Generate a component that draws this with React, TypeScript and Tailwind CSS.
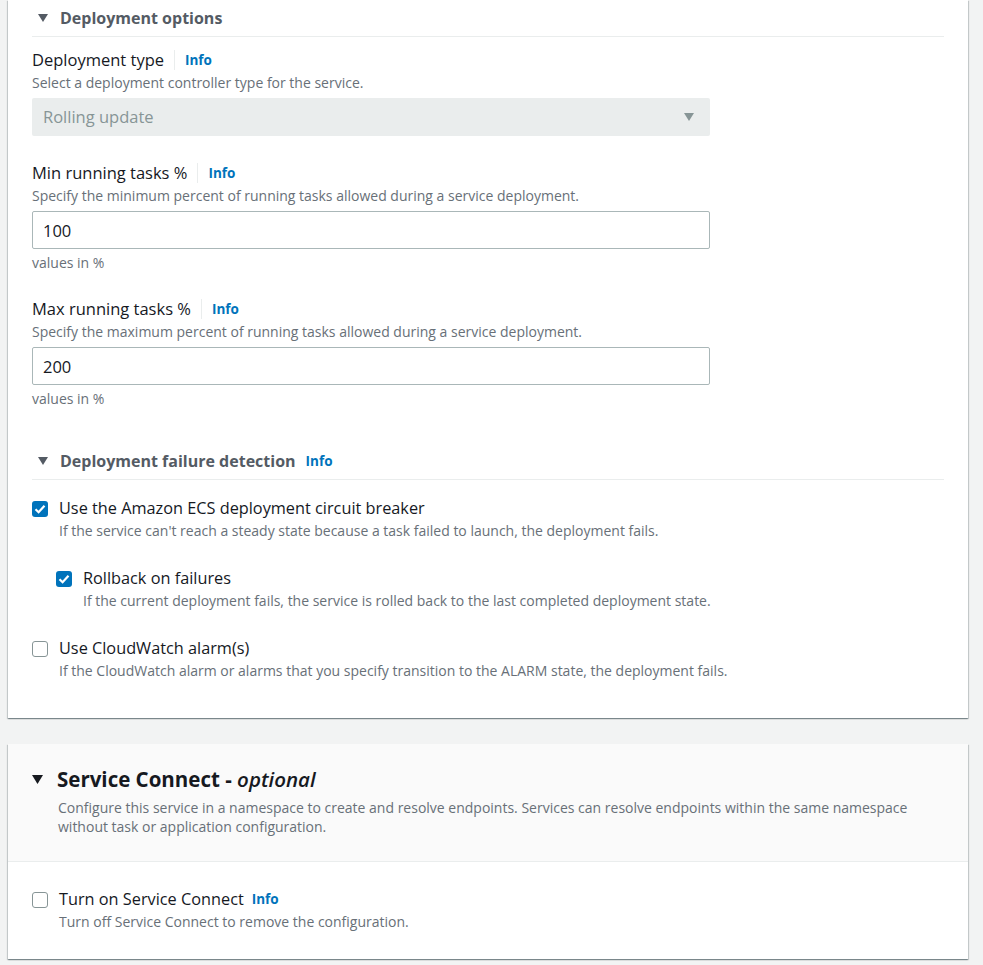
import React from 'react';

const font = { fontFamily: '"Open Sans", "Noto Sans", Arial, sans-serif' };

const Caret = ({ className = '' }: { className?: string }) => (
  <svg viewBox="0 0 10 8" className={className} fill="currentColor">
    <polygon points="0,0 10,0 5,8" />
  </svg>
);

const Info = () => (
  <a className="mt-[2px] text-[13.5px] font-bold text-[#0073bb] leading-none cursor-pointer">Info</a>
);

const Checkbox = ({ checked }: { checked?: boolean }) =>
  checked ? (
    <span className="mt-[4px] flex h-4 w-4 shrink-0 items-center justify-center rounded-[3px] bg-[#0073bb]">
      <svg viewBox="0 0 16 16" className="h-4 w-4" fill="none" stroke="white" strokeWidth="2.2">
        <polyline points="3.5,8.2 6.6,11.2 12.5,4.8" />
      </svg>
    </span>
  ) : (
    <span className="mt-[4px] block h-4 w-4 shrink-0 rounded-[3px] border border-[#879596] bg-white" />
  );

const Field = ({ label, hint, children }: { label: string; hint: string; children: React.ReactNode }) => (
  <div>
    <div className="flex items-center h-[22px]">
      <span className="text-[16.5px] text-[#16191f]">{label}</span>
      <span className="mx-[10px] h-[20px] w-px bg-[#eaeded]" />
      <Info />
    </div>
    <p className="mt-[3px] text-[14px] leading-[18px] text-[#687078]">{hint}</p>
    <div className="mt-[6px]">{children}</div>
  </div>
);

const Option = ({ checked, label, hint, info }: { checked?: boolean; label: string; hint: string; info?: boolean }) => (
  <label className="flex gap-[11px]">
    <Checkbox checked={checked} />
    <div>
      <div className="flex items-center gap-[8px] h-[22px]">
        <span className="text-[16.3px] text-[#16191f]">{label}</span>
        {info && <Info />}
      </div>
      <p className="mt-[3px] text-[14px] leading-[18px] text-[#687078]">{hint}</p>
    </div>
  </label>
);

const SubHeader = ({ title, info }: { title: string; info?: boolean }) => (
  <div className="flex h-[37px] items-center gap-[10px] border-b border-[#eaeded] pl-[6px]">
    <Caret className="h-[8px] w-[10px] text-[#545b64]" />
    <span className="ml-[2px] text-[16px] font-bold text-[#545b64]">{title}</span>
    {info && <Info />}
  </div>
);

const cardShadow =
  'shadow-[0_1px_1px_0_rgba(0,28,36,0.3),1px_1px_1px_0_rgba(0,28,36,0.15),-1px_1px_1px_0_rgba(0,28,36,0.15)]';

export default function App() {
  return (
    <div style={font} className="min-h-screen bg-[#f2f3f3] pl-[8px] pr-[15px] pb-[5px]">
      {/* Deployment options */}
      <section className={`bg-white px-[24px] pb-[38px] ${cardShadow}`}>
        <SubHeader title="Deployment options" />

        <div className="mt-[12px] flex flex-col gap-[26px]">
          <Field label="Deployment type" hint="Select a deployment controller type for the service.">
            <div className="flex h-[38px] w-[678px] items-center justify-between rounded-[2px] bg-[#eaeded] px-[11px]">
              <span className="text-[16.5px] text-[#879596]">Rolling update</span>
              <Caret className="mr-[5px] h-[8px] w-[10px] text-[#879596]" />
            </div>
          </Field>

          <Field label="Min running tasks %" hint="Specify the minimum percent of running tasks allowed during a service deployment.">
            <input
              defaultValue="100"
              className="h-[38px] w-[678px] rounded-[2px] border border-[#aab7b8] px-[10px] text-[16.5px] text-[#16191f] outline-none"
            />
            <p className="mt-[5px] text-[14px] leading-[18px] text-[#687078]">values in %</p>
          </Field>

          <Field label="Max running tasks %" hint="Specify the maximum percent of running tasks allowed during a service deployment.">
            <input
              defaultValue="200"
              className="h-[38px] w-[678px] rounded-[2px] border border-[#aab7b8] px-[10px] text-[16.5px] text-[#16191f] outline-none"
            />
            <p className="mt-[5px] text-[14px] leading-[18px] text-[#687078]">values in %</p>
          </Field>
        </div>

        <div className="mt-[35px]">
          <SubHeader title="Deployment failure detection" info />
        </div>

        <div className="mt-[17px] flex flex-col gap-[27px]">
          <div className="flex flex-col gap-[27px]">
            <Option
              checked
              label="Use the Amazon ECS deployment circuit breaker"
              hint="If the service can't reach a steady state because a task failed to launch, the deployment fails."
            />
            <div className="pl-[24px]">
              <Option
                checked
                label="Rollback on failures"
                hint="If the current deployment fails, the service is rolled back to the last completed deployment state."
              />
            </div>
          </div>
          <Option
            label="Use CloudWatch alarm(s)"
            hint="If the CloudWatch alarm or alarms that you specify transition to the ALARM state, the deployment fails."
          />
        </div>
      </section>

      {/* Service Connect */}
      <section className={`mt-[26px] bg-white ${cardShadow}`}>
        <div className="border-b border-[#eaeded] bg-[#fafafa] px-[24px] pt-[21px] pb-[25px]">
          <div className="flex items-center gap-[14px]">
            <Caret className="h-[9px] w-[11px] text-[#16191f]" />
            <h2 className="text-[20.5px] leading-[28px] font-bold text-[#16191f]">
              Service Connect - <i className="font-semibold">optional</i>
            </h2>
          </div>
          <p className="mt-[5px] ml-[26px] max-w-[860px] text-[14px] leading-[19px] text-[#687078]">
            Configure this service in a namespace to create and resolve endpoints. Services can resolve endpoints within the same namespace without task or application configuration.
          </p>
        </div>
        <div className="px-[24px] pt-[26px] pb-[28px]">
          <Option label="Turn on Service Connect" info hint="Turn off Service Connect to remove the configuration." />
        </div>
      </section>
    </div>
  );
}
